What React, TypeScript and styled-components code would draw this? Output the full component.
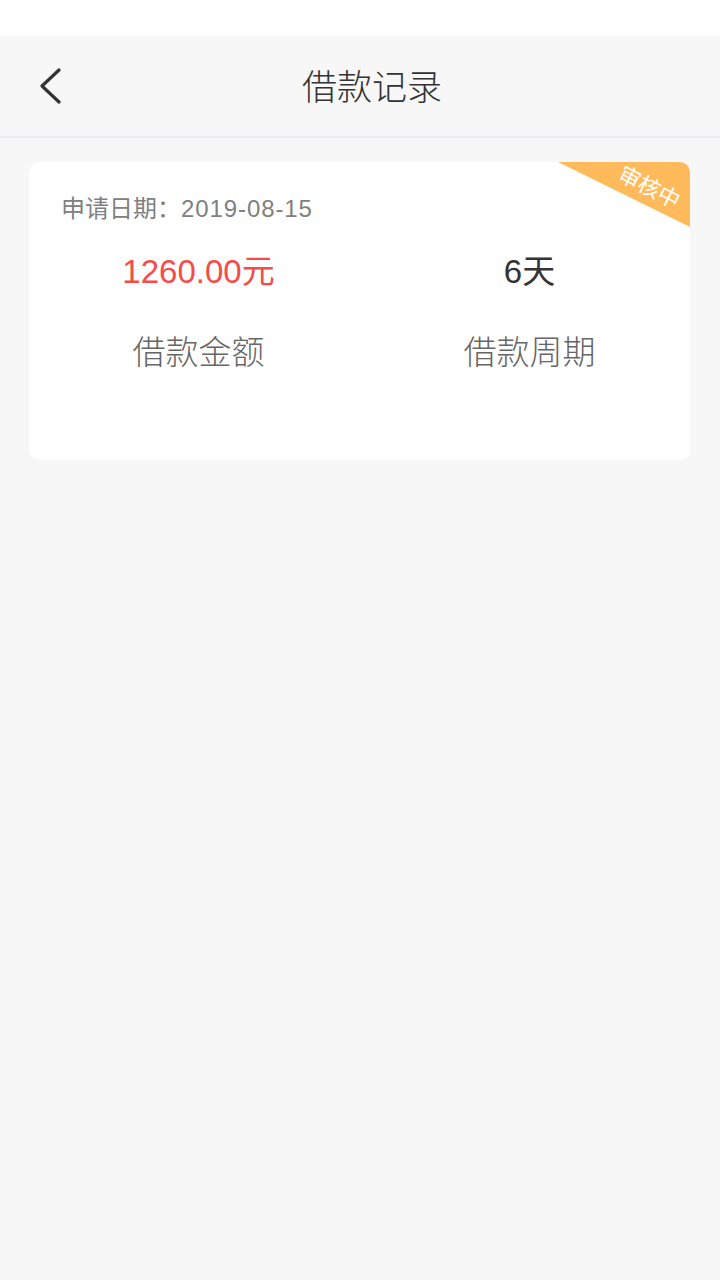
import React from "react";
import styled, { createGlobalStyle } from "styled-components";

const GlobalStyle = createGlobalStyle`
  html, body {
    margin: 0;
    padding: 0;
    background: #f7f7f7;
    font-family: "Liberation Sans", "Noto Sans CJK SC", sans-serif;
  }
`;

const Page = styled.div`
  min-height: 1280px;
  background: #f7f7f7;
`;

const StatusBar = styled.div`
  height: 36px;
  background: #ffffff;
`;

const Header = styled.header`
  position: relative;
  height: 100px;
  display: flex;
  align-items: center;
  justify-content: center;
  padding-left: 24px;
  background: #f7f7f7;
  border-bottom: 2px solid #e9edf1;
`;

const BackButton = styled.button`
  position: absolute;
  left: 34px;
  top: 28px;
  width: 32px;
  height: 44px;
  padding: 0;
  border: none;
  background: none;
  display: flex;
  align-items: center;
  justify-content: center;
`;

const Title = styled.h1`
  margin: 4px 0 0;
  font-size: 35px;
  font-weight: 300;
  line-height: 44px;
  color: #333333;
`;

const Card = styled.div`
  position: relative;
  margin: 24px 30px 0 29px;
  padding: 30px 0 87px 32px;
  background: #ffffff;
  border-radius: 10px;
  overflow: hidden;
`;

const Badge = styled.div`
  position: absolute;
  top: 0;
  right: 0;
  width: 132px;
  height: 65px;
`;

const BadgeShape = styled.div`
  width: 100%;
  height: 100%;
  background: #ffbb5b;
  clip-path: polygon(0 0, 100% 0, 100% 100%);
`;

const BadgeText = styled.span`
  position: absolute;
  left: 91px;
  top: 26px;
  transform: translate(-50%, -50%) rotate(27deg);
  font-size: 22px;
  line-height: 24px;
  color: #ffffff;
  white-space: nowrap;
`;

const DateLine = styled.div`
  font-size: 24px;
  line-height: 34px;
  color: #808080;
`;

const DateValue = styled.span`
  letter-spacing: 0.9px;
`;

const Grid = styled.div`
  display: grid;
  grid-template-columns: 331px 331px;
  margin-left: -28px;
  margin-top: 26px;
  row-gap: 41px;
`;

const Value = styled.div<{ $accent?: boolean }>`
  text-align: center;
  font-size: 33px;
  line-height: 40px;
  color: ${(p) => (p.$accent ? "#f94a4a" : "#333333")};
`;

const Label = styled.div`
  text-align: center;
  font-size: 33px;
  font-weight: 300;
  line-height: 40px;
  color: #666666;
`;

const App = () => {
  return (
    <Page>
      <GlobalStyle />
      <StatusBar />
      <Header>
        <BackButton>
          <svg width="24" height="36" viewBox="0 0 24 36" fill="none">
            <path
              d="M21 2 L4 18 L21 34"
              stroke="#333333"
              strokeWidth="3.2"
              strokeLinecap="round"
              strokeLinejoin="round"
            />
          </svg>
        </BackButton>
        <Title>借款记录</Title>
      </Header>
      <Card>
        <Badge>
          <BadgeShape />
          <BadgeText>审核中</BadgeText>
        </Badge>
        <DateLine>
          申请日期：<DateValue>2019-08-15</DateValue>
        </DateLine>
        <Grid>
          <Value $accent>1260.00元</Value>
          <Value>6天</Value>
          <Label>借款金额</Label>
          <Label>借款周期</Label>
        </Grid>
      </Card>
    </Page>
  );
};

export default App;
